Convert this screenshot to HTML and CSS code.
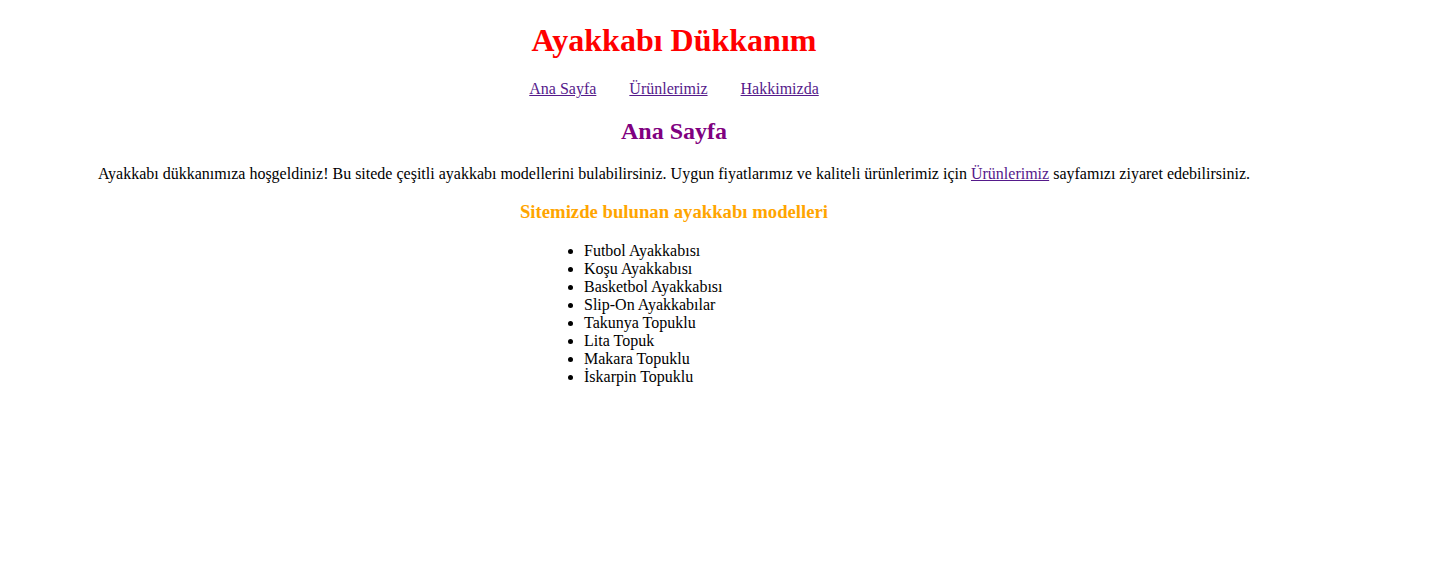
FILE: index.html
```html
<!DOCTYPE html>
<html lang="tr">
<head>
<meta charset="utf-8">
<title>Ayakkabı Dükkanım</title>
<link rel="stylesheet" href="styles.css">
</head>
<body>
<div class="page">
  <h1 class="site-title">Ayakkabı Dükkanım</h1>
  <nav class="nav">
    <a href="#">Ana Sayfa</a>
    <a href="#">Ürünlerimiz</a>
    <a href="#">Hakkimizda</a>
  </nav>
  <h2 class="section-title">Ana Sayfa</h2>
  <p class="intro">Ayakkabı dükkanımıza hoşgeldiniz! Bu sitede çeşitli ayakkabı modellerini bulabilirsiniz. Uygun fiyatlarımız ve kaliteli ürünlerimiz için <a href="#">Ürünlerimiz</a> sayfamızı ziyaret edebilirsiniz.</p>
  <h3 class="models-title">Sitemizde bulunan ayakkabı modelleri</h3>
  <ul class="models">
    <li>Futbol Ayakkabısı</li>
    <li>Koşu Ayakkabısı</li>
    <li>Basketbol Ayakkabısı</li>
    <li>Slip-On Ayakkabılar</li>
    <li>Takunya Topuklu</li>
    <li>Lita Topuk</li>
    <li>Makara Topuklu</li>
    <li>İskarpin Topuklu</li>
  </ul>
</div>
</body>
</html>
```

FILE: styles.css
```css
body {
  margin: 0 8px 8px;
  font-family: "Liberation Serif", "Times New Roman", serif;
  font-size: 16px;
  color: #000;
  background: #fff;
}

.page {
  width: 1332px;
  text-align: center;
}

a {
  color: #551a8b;
}

.site-title {
  color: #ff0000;
  font-size: 32px;
  margin: 21.5px 0 21.44px;
}

.nav {
  display: flex;
  justify-content: center;
  gap: 33px;
}

.section-title {
  color: #800080;
  font-size: 24px;
  margin: 19.92px 0;
}

.intro {
  margin: 16px 0;
}

.models-title {
  color: #ffa500;
  font-size: 18.72px;
  margin: 18.72px 0;
}

.models {
  width: 220px;
  margin: 18.72px auto 16px;
  padding-left: 40px;
  text-align: left;
}
```
